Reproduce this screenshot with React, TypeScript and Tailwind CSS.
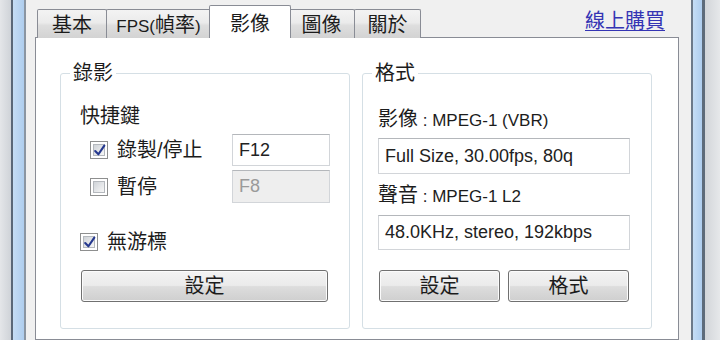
import React from "react";

const C = ({ children, className = "" }: { children: React.ReactNode; className?: string }) => (
  <span className={"text-[20px] " + className}>{children}</span>
);

function Check({ checked }: { checked?: boolean }) {
  return (
    <div className="w-[18px] h-[18px] shrink-0 border border-[#8e8f8f] bg-white p-[2px] relative">
      <div className="w-full h-full border border-[#b4b8bd] bg-[linear-gradient(135deg,#cfd3d8,#f7f7f7)]" />
      {checked && (
        <svg className="absolute left-[1px] top-[1px]" width="15" height="15" viewBox="0 0 14 14">
          <path d="M3 7.5 L6 10.5 L11.5 2.5" fill="none" stroke="#25388f" strokeWidth="2" strokeLinecap="round" strokeLinejoin="round" />
        </svg>
      )}
    </div>
  );
}

function Button({ children, className = "" }: { children: React.ReactNode; className?: string }) {
  return (
    <div
      className={
        "h-[32px] border border-[#707070] rounded-[3px] bg-[linear-gradient(#f3f3f3,#ebebeb_48%,#dddddd_52%,#cfcfcf)] shadow-[inset_0_0_0_1px_#fbfbfb] flex items-center justify-center " +
        className
      }
    >
      {children}
    </div>
  );
}

function Tab({ label, selected, w }: { label: React.ReactNode; selected?: boolean; w: string }) {
  if (selected)
    return (
      <div
        className={
          "relative z-10 -ml-[2px] -mr-[2px] h-[33px] bg-white border border-b-0 border-[#898c95] rounded-t-[2px] flex items-start justify-center pt-[3px] " +
          w
        }
      >
        {label}
      </div>
    );
  return (
    <div
      className={
        "h-[29px] -ml-px first:ml-0 border border-b-0 border-[#898c95] rounded-t-[2px] bg-[linear-gradient(#f3f3f3,#ebebeb_45%,#dedede_55%,#d3d3d3)] flex items-center justify-center pt-[1px] " +
        w
      }
    >
      {label}
    </div>
  );
}

function Group({ title, children, className = "", legendClass = "" }: { title: string; children: React.ReactNode; className?: string; legendClass?: string }) {
  return (
    <div className={"border border-[#d5dfe5] rounded-[3px] shadow-[inset_0_0_0_1px_#ffffff] flex flex-col " + className}>
      <div className={"-mt-[12px] px-[3px] bg-white w-fit h-[22px] leading-[22px] " + legendClass}>
        <C>{title}</C>
      </div>
      {children}
    </div>
  );
}

function Input({ value, disabled, className = "" }: { value: string; disabled?: boolean; className?: string }) {
  return (
    <div
      className={
        "border border-[#d2d5d9] border-t-[#b4b7bb] flex items-center pl-[6px] text-[18px] " +
        (disabled ? "bg-[#eeeeee] text-[#9a9a9a] " : "bg-white text-[#222] ") +
        className
      }
    >
      {value}
    </div>
  );
}

export default function App() {
  return (
    <div className="w-[720px] h-[340px] overflow-hidden flex bg-[#f0f0f0] text-[#1c1c1c] font-['Liberation_Sans','Noto_Sans_CJK_TC',sans-serif] text-[16px]">
      {/* left window frame */}
      <div className="flex h-full shrink-0">
        <div className="w-[11px] bg-[linear-gradient(90deg,#e4e6e9,#cfd3d8)]" />
        <div className="w-[2px] bg-[#5a6878]" />
        <div className="w-[11px] bg-[linear-gradient(90deg,#c5ddf5,#aecdee)]" />
        <div className="w-[2px] bg-[#8a95a2]" />
      </div>

      {/* dialog */}
      <div className="flex-1 flex flex-col pl-[9px] pr-[12px]">
        <div className="h-[38px] -mb-px flex items-end pl-[2px] relative">
          <Tab w="w-[70px]" label={<C>基本</C>} />
          <Tab w="w-[105px]" label={<span className="text-[17px]">FPS(<C>幀率</C>)</span>} />
          <Tab selected w="w-[82px]" label={<C>影像</C>} />
          <Tab w="w-[67px]" label={<C>圖像</C>} />
          <Tab w="w-[67px]" label={<C>關於</C>} />
          <div className="ml-auto mr-[14px] self-start mt-[6px] text-[#3434b4] underline underline-offset-2">
            <C>線上購買</C>
          </div>
        </div>
        <div className="flex-1 bg-white border border-[#898c95] flex pt-[35px] pl-[24px] gap-[12px]">
          <Group title="錄影" legendClass="-ml-[10px]" className="w-[290px] h-[256px] pl-[19px]">
            <div className="mt-[20px] h-[24px] leading-[24px]">
              <C>快捷鍵</C>
            </div>
            <div className="mt-[6px] flex items-center">
              <div className="w-[142px] ml-[10px] flex items-center gap-[9px]">
                <Check checked />
                <C>錄製/停止</C>
              </div>
              <Input value="F12" className="w-[98px] h-[32px]" />
            </div>
            <div className="mt-[4px] flex items-center">
              <div className="w-[142px] ml-[10px] flex items-center gap-[9px]">
                <Check />
                <C>暫停</C>
              </div>
              <Input value="F8" disabled className="w-[98px] h-[33px]" />
            </div>
            <div className="mt-[27px] h-[24px] flex items-center gap-[9px]">
              <Check checked />
              <C>無游標</C>
            </div>
            <Button className="mt-[16px] ml-[1px] w-[247px]">
              <C>設定</C>
            </Button>
          </Group>
          <Group title="格式" legendClass="-ml-[6px]" className="w-[290px] h-[256px] pl-[15px]">
            <div className="mt-[23px] h-[24px] leading-[24px] text-[17px]">
              <C>影像</C> : MPEG-1 (VBR)
            </div>
            <Input value="Full Size, 30.00fps, 80q" className="mt-[7px] w-[252px] h-[36px]" />
            <div className="mt-[9px] h-[24px] leading-[24px] text-[17px]">
              <C>聲音</C> : MPEG-1 L2
            </div>
            <Input value="48.0KHz, stereo, 192kbps" className="mt-[8px] w-[252px] h-[35px]" />
            <div className="mt-[20px] flex gap-[8px] ml-[1px]">
              <Button className="w-[121px]">
                <C>設定</C>
              </Button>
              <Button className="w-[121px]">
                <C>格式</C>
              </Button>
            </div>
          </Group>
        </div>
      </div>

      {/* right window frame */}
      <div className="flex h-full shrink-0">
        <div className="w-[2px] bg-[#6c7989]" />
        <div className="w-[9px] bg-[linear-gradient(90deg,#c5ddf5,#aecdee)]" />
        <div className="w-[3px] bg-[#5d6b7a]" />
        <div className="w-[15px] bg-[linear-gradient(90deg,#d2d5d9,#e6e8ea)]" />
      </div>
    </div>
  );
}
